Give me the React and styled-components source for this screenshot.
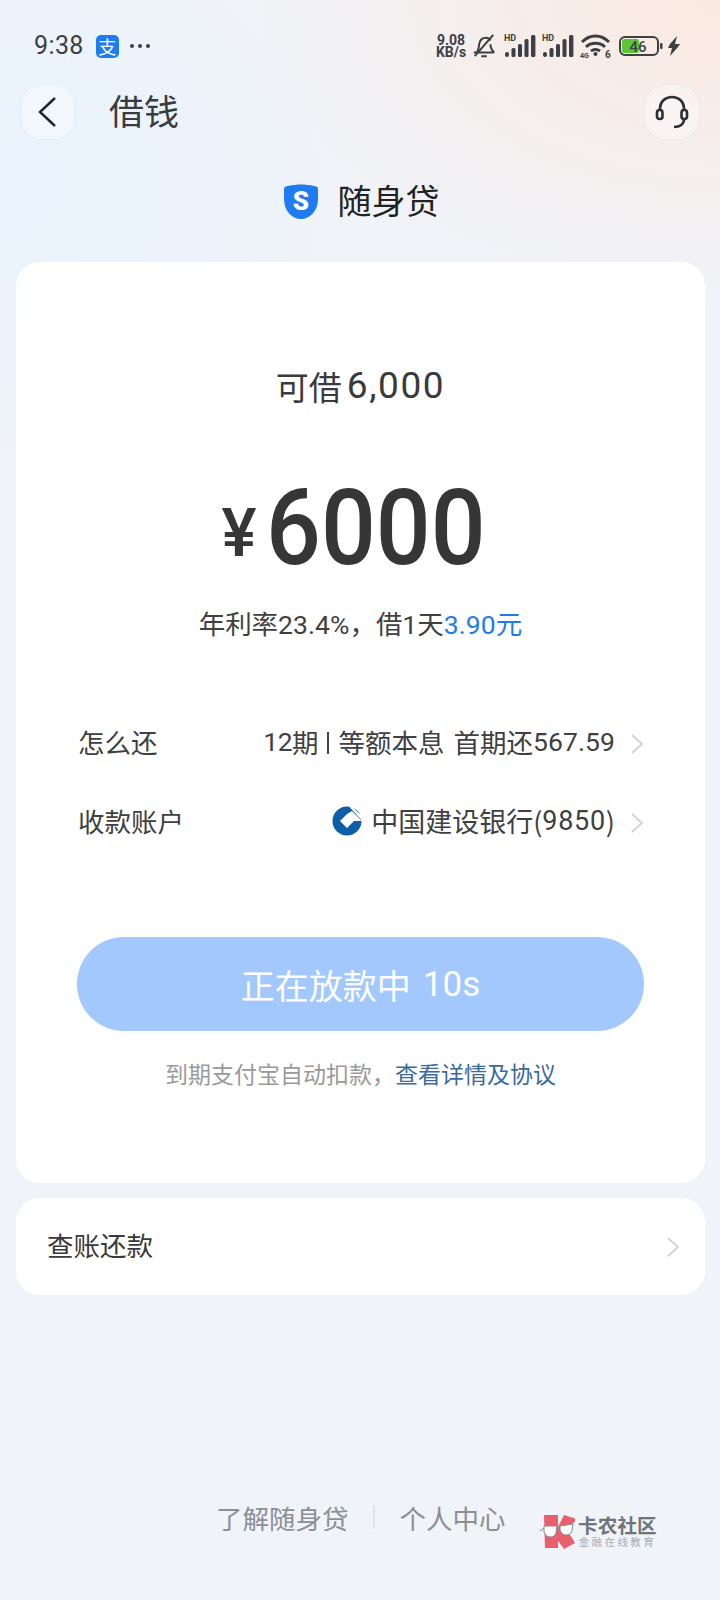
import React from "react";
import styled, { createGlobalStyle } from "styled-components";

const Global = createGlobalStyle`
  html, body { margin: 0; padding: 0; }
  body { width: 720px; height: 1600px; overflow: hidden; font-family: "Noto Sans CJK SC", Roboto, sans-serif; color: #333; }
  * { box-sizing: border-box; }
`;
const Page = styled.div`
  width: 720px; height: 1600px; display: flex; flex-direction: column; position: relative;
  background:
    radial-gradient(ellipse 480px 300px at 100% 0, #fbe9e0 0%, rgba(251,233,224,0) 100%),
    radial-gradient(ellipse 340px 280px at 0 190px, #e8f3fe 0%, rgba(232,243,254,0) 100%),
    #f0f3f8;
`;
const StatusBar = styled.div`
  height: 60px; padding: 32px 40px 0 34px; display: flex; align-items: flex-start; justify-content: space-between;
`;
const StatusLeft = styled.div`display: flex; align-items: center; height: 28px;`;
const Time = styled.span`font: 400 25px/28px Roboto, sans-serif; color: #3c3f44; letter-spacing: .4px;`;
const AppBadge = styled.span`
  width: 23px; height: 23px; margin-left: 12px; border-radius: 5px; background: #1f7cf0; color: #fff;
  font: 400 18px/23px "Noto Sans CJK SC", sans-serif; text-align: center;
`;
const Dots = styled.span`display: flex; gap: 4px; margin-left: 11px; i { width: 4px; height: 4px; border-radius: 50%; background: #3c3f44; }`;
const StatusRight = styled.div`display: flex; align-items: center; height: 28px; color: #3c3f44;`;
const Speed = styled.span`
  font: 700 14px/12px Roboto, sans-serif; text-align: center; width: 32px; color: #3c3f44;
`;
const Spacer = styled.span`width: ${p => p.$w}px; flex: none;`;
const Header = styled.div`
  height: 56px; margin-top: 24px; padding: 0 20px; display: flex; align-items: center;
`;
const RoundBtn = styled.div`
  width: 56px; height: 56px; border-radius: 22px; display: flex; align-items: center; justify-content: center;
  background: rgba(255,255,255,.35); border: 1px solid rgba(225,230,238,.7); flex: none;
`;
const Title = styled.div`font-size: 35px; line-height: 56px; height: 56px; margin-left: 33px; margin-top: -4px; flex: 1; color: #383b40; font-weight: 400;`;
const Product = styled.div`
  height: 40px; margin-top: 40px; display: flex; align-items: center; justify-content: center; gap: 19px;
  font-size: 34px; color: #222;
  span { margin-top: -2px; }
  svg { margin: 4px 0 0 2px; }
`;
const Card = styled.div`background: #fff; border-radius: 24px; margin: 0 15px 0 16px;`;
const MainCard = styled(Card)`
  margin-top: 42px; height: 921px; display: flex; flex-direction: column; align-items: center; padding: 0 60px;
`;
const Limit = styled.div`
  margin-top: 100px; height: 48px; font-size: 33px; line-height: 48px; color: #3a3a3a; display: flex; align-items: center; gap: 5px;
  b { font: 400 37px/48px Roboto, sans-serif; letter-spacing: 1.6px; }
`;
const Amount = styled.div`margin-top: 64px; height: 110px; display: flex; align-items: center; color: #363636;`;
const Yen = styled.span`font: 500 66px/110px Roboto, sans-serif; margin-top: 10px; margin-right: 6px; width: 38px;`;
const Digits = styled.span`
  font: 500 105px/110px Roboto, sans-serif; display: inline-block; width: 234px; white-space: nowrap;
  transform: scaleX(.92); transform-origin: left center;
`;
const Rate = styled.div`margin-top: 19px; font-size: 26.5px; line-height: 40px; color: #404040; letter-spacing: -.1px; em { font-style: normal; color: #1f7ceb; }`;
const Rows = styled.div`margin-top: 76px; width: 100%; display: flex; flex-direction: column; gap: 39px;`;
const Row = styled.div`display: flex; align-items: center; height: 40px; font-size: 26.5px; color: #404040; padding: 0 0 0 2px;`;
const RowLabel = styled.span`flex: 1;`;
const RowValue = styled.span`display: flex; align-items: center; white-space: nowrap; font-size: ${p => p.$size || 26.5}px; margin-top: 1px;`;
const Num = styled.span`font-family: Roboto, sans-serif; letter-spacing: .1px;`;
const Pair = styled.span`font-family: Roboto, sans-serif; letter-spacing: -.6px;`;
const Gap = styled.i`width: 9px;`;
const Sep = styled.i`width: 2px; height: 22px; background: #444; margin: 2px 9px 0;`;
const WideNum = styled(Num)`letter-spacing: .7px;`;
const BankLogo = styled.svg`margin-right: 9px;`;
const Chevron = ({ color = "#cfd1d4", w = 16, h = 24, sw = 1.8 }) => (
  <svg width={w} height={h} viewBox="0 0 16 24" fill="none"><path d="M3 3l10 9-10 9" stroke={color} strokeWidth={sw} /></svg>
);
const ChevronBox = styled.span`margin: 5px 0 0 14px; display: flex; width: 16px;`;
const Action = styled.div`
  margin-top: 97px; width: 567px; height: 94px; flex: none; border-radius: 47px; background: #a2c8fd; color: #fff;
  display: flex; align-items: center; justify-content: center; font-size: 34px; font-weight: 400; gap: 12px;
  span { font: 400 35px Roboto, sans-serif; }
`;
const Note = styled.div`margin-top: 22px; font-size: 23px; line-height: 40px; color: #9a9a9a; em { font-style: normal; color: #3b6a9c; }`;
const BillCard = styled(Card)`
  margin-top: 15px; height: 97px; display: flex; align-items: center; justify-content: space-between;
  padding: 0 24px 5px 31px; font-size: 26.5px; color: #3a3a3a;
  svg { margin-top: 5px; }
`;
const Footer = styled.div`
  position: absolute; left: 216px; top: 1493px; height: 48px; display: flex; align-items: center;
  font-size: 26.5px; color: #8c8f94;
`;
const Divider = styled.i`width: 2px; height: 24px; background: #e0e3e8; margin: 0 25px 0 24px;`;
const Mark = styled.div`
  position: absolute; left: 540px; top: 1513px; display: flex; align-items: center; gap: 3px;
`;
const MarkText = styled.div`display: flex; flex-direction: column; align-items: center;`;
const MarkTop = styled.span`font-size: 19.5px; line-height: 20px; font-weight: 700; color: #6f7479; letter-spacing: .2px;`;
const MarkSub = styled.span`font-size: 10.5px; line-height: 13px; color: #a9adb2; letter-spacing: 2.4px;`;

const Bars = () => (
  <svg width="32" height="24" viewBox="0 0 32 24" fill="#3c3f44">
    <text x="0" y="7" fontFamily="Roboto" fontWeight="700" fontSize="9">HD</text>
    <rect x="1" y="18" width="4" height="5" rx="2" /><rect x="7.5" y="14" width="4" height="9" rx="1.5" /><rect x="14" y="10" width="4" height="13" rx="1.5" /><rect x="20.5" y="5" width="4" height="18" rx="1.5" />
    <rect x="27" y="1" width="4.4" height="22" rx="1.5" />
  </svg>
);

export default function App() {
  return (
    <Page>
      <Global />
      <StatusBar>
        <StatusLeft>
          <Time>9:38</Time>
          <AppBadge>支</AppBadge>
          <Dots><i /><i /><i /></Dots>
        </StatusLeft>
        <StatusRight>
          <Speed>9.08<br />KB/s</Speed>
          <Spacer $w={5} />
          <svg width="24" height="26" viewBox="0 0 26 26" fill="none" stroke="#3c3f44" strokeWidth="2.2">
            <path d="M2 20h22M5 20c3-3 2-7 3-10 1-4 4-6 7-6 2 0 4 1 5 3M20 11c0 3 1 6 4 9M10 24h6M3 24L23 1" />
          </svg>
          <Spacer $w={8} />
          <Bars />
          <Spacer $w={6} />
          <Bars />
          <Spacer $w={6} />
          <svg width="32" height="27" viewBox="0 0 32 27" fill="none" stroke="#3c3f44" strokeWidth="3">
            <path d="M2 9c8-8 19-8 27 0M6 14c5-5 14-5 19 0M11 18c3-2 6-2 9 0" />
            <circle cx="15.5" cy="21" r="2" fill="#3c3f44" stroke="none" />
            <text x="25" y="25" fontFamily="Roboto" fontWeight="700" fontSize="10" fill="#3c3f44" stroke="none">6</text>
            <text x="0" y="25" fontFamily="Roboto" fontWeight="700" fontSize="7" fill="#3c3f44" stroke="none">4G</text>
          </svg>
          <Spacer $w={7} />
          <svg width="44" height="20" viewBox="0 0 44 20">
            <rect x="1" y="1" width="38" height="18" rx="5" fill="none" stroke="#3c3f44" strokeWidth="2" />
            <rect x="3" y="3" width="17" height="14" rx="2" fill="#5ec43a" />
            <text x="19" y="15.5" textAnchor="middle" fontFamily="Roboto" fontWeight="500" fontSize="15" fill="#3c3f44">46</text>
            <rect x="41" y="7" width="2.5" height="6" rx="1" fill="#3c3f44" />
          </svg>
          <Spacer $w={5} />
          <svg width="12" height="20" viewBox="0 0 12 20" fill="#3c3f44">
            <path d="M9 0L2 8l-2 4h4L2 20l8-9 2-3H7z" />
          </svg>
        </StatusRight>
      </StatusBar>
      <Header>
        <RoundBtn>
          <svg width="22" height="32" viewBox="0 0 22 32" fill="none" stroke="#222" strokeWidth="2.4"><path d="M18 2L3 16l15 14" /></svg>
        </RoundBtn>
        <Title>借钱</Title>
        <RoundBtn>
          <svg width="36" height="36" viewBox="0 0 36 36" fill="none" stroke="#2c2f33" strokeWidth="2.6">
            <path d="M6 17v-3C6 8 11 3 18 3s12 5 12 11v3" />
            <rect x="3" y="16" width="5.5" height="9" rx="2.5" />
            <rect x="27.5" y="16" width="5.5" height="9" rx="2.5" />
            <path d="M30 25c0 5-4 8-10 8" />
          </svg>
        </RoundBtn>
      </Header>
      <Product>
        <svg width="36" height="36" viewBox="0 0 36 36">
          <path d="M1 5c0-2 2-3 4-3 9-2 17-2 26 0 2 0 4 1 4 3v10c0 12-8 20-17 20S1 27 1 15z" fill="#1f7cf0" />
          <text x="18" y="26" textAnchor="middle" fontFamily="Roboto" fontWeight="900" fontSize="26" fill="#fff">S</text>
        </svg>
        <span>随身贷</span>
      </Product>
      <MainCard>
        <Limit>可借<b>6,000</b></Limit>
        <Amount><Yen>¥</Yen><Digits>6000</Digits></Amount>
        <Rate>年利率<Num>23.4%</Num>，借<Num>1</Num>天<em><Num>3.90</Num>元</em></Rate>
        <Rows>
          <Row>
            <RowLabel>怎么还</RowLabel>
            <RowValue><Pair>12</Pair>期<Sep />等额本息<Gap />首期还<Num>567.59</Num></RowValue>
            <ChevronBox><Chevron /></ChevronBox>
          </Row>
          <Row>
            <RowLabel>收款账户</RowLabel>
            <RowValue $size={27}>
              <BankLogo width="30" height="32" viewBox="0 0 30 32">
                <circle cx="15" cy="16" r="14.5" fill="#0f5ea8" />
                <path d="M15 9l5-3 10 10h-8l-7 7-7-7z" fill="#fff" />
                <path d="M17 1.5l2.5-.5L31 12.5l-1 3z" fill="#fff" />
              </BankLogo>
              中国建设银行(<WideNum>9850</WideNum>)
            </RowValue>
            <ChevronBox><Chevron /></ChevronBox>
          </Row>
        </Rows>
        <Action>正在放款中<span>10s</span></Action>
        <Note>到期支付宝自动扣款，<em>查看详情及协议</em></Note>
      </MainCard>
      <BillCard>查账还款<Chevron /></BillCard>
      <Footer>了解随身贷<Divider />个人中心</Footer>
      <Mark>
        <svg width="35" height="36" viewBox="0 0 35 36">
          <path d="M4 2h14v12l6-12 13 4-10 11 8 13-11 6-6-8v7H5z" fill="#e8606e" />
          <path d="M4 15L0 18M16 15h5" stroke="#888" strokeWidth="1" fill="none" />
          <path d="M4 13h13l-1 7c-1 3-3 4-6 4s-5-2-6-5z" fill="#fff" stroke="#888" strokeWidth="1" />
          <path d="M20 13l13-2-1 7c-1 3-3 4-6 4s-5-2-6-5z" fill="#fff" stroke="#888" strokeWidth="1" />
        </svg>
        <MarkText><MarkTop>卡农社区</MarkTop><MarkSub>金融在线教育</MarkSub></MarkText>
      </Mark>
    </Page>
  );
}
